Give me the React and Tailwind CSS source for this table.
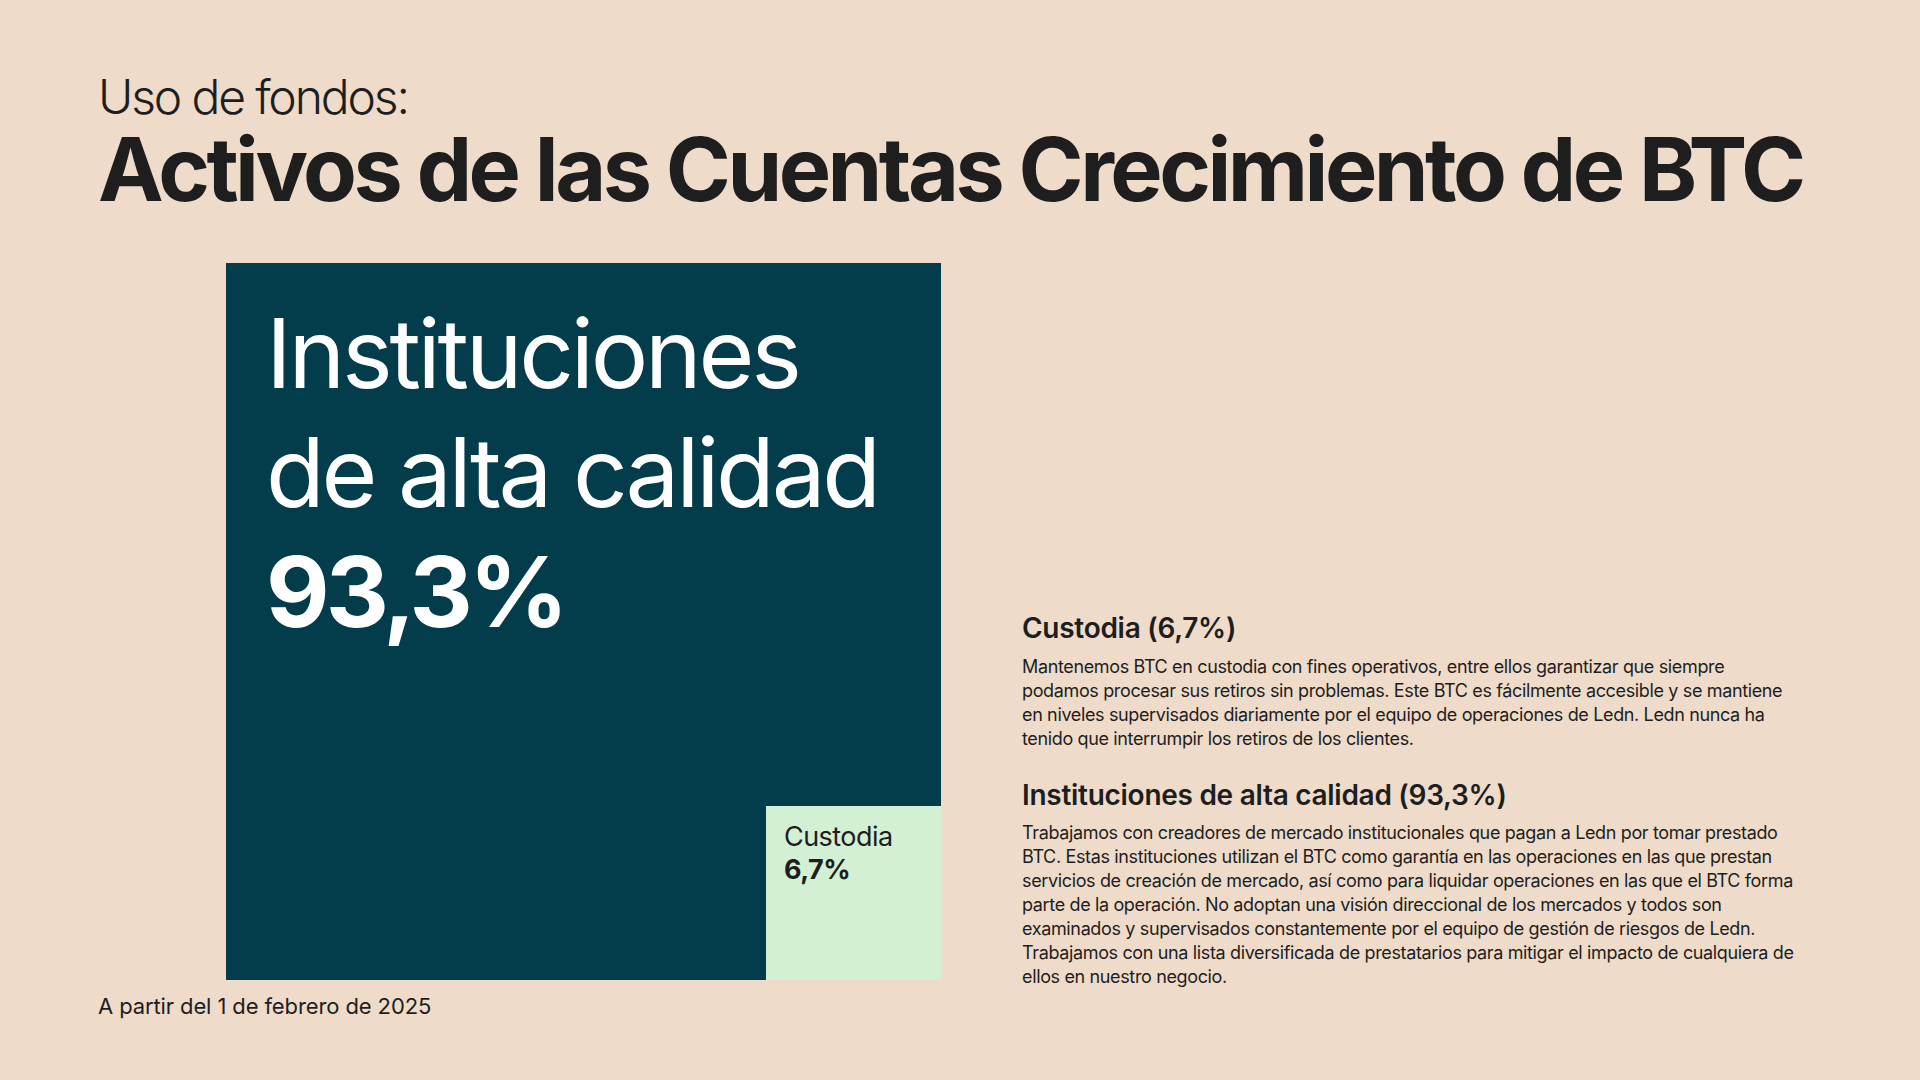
export default function App() {
  return (
    <div className="w-[1920px] h-[1080px] bg-[#EEDBCA] text-[#1E1E1E] font-['Inter',sans-serif] flex flex-col pl-[98px] pt-[75px] overflow-hidden">
      <p className="text-[48px] leading-[44px] font-light tracking-[-0.045em]">Uso de fondos:</p>
      <h1 className="mt-[10px] text-[88px] leading-[80px] font-bold tracking-[-0.04em] whitespace-nowrap">
        Activos de las Cuentas Crecimiento de BTC
      </h1>

      <div className="mt-[54px] flex h-[717px]">
        {/* Treemap */}
        <div className="ml-[128px] w-[715px] h-[717px] bg-[#033C4A] flex flex-col pl-[40px] pt-[31px] text-white">
          <p className="text-[96px] leading-[119px] font-normal tracking-[-0.034em]">Instituciones</p>
          <p className="text-[96px] leading-[119px] font-normal tracking-[-0.034em]">de alta calidad</p>
          <p className="text-[98px] leading-[119px] font-bold tracking-[-0.04em]">93,3%</p>
          <div className="mt-auto self-end w-[175px] h-[174px] bg-[#D4F0D4] text-[#1E1E1E] pl-[18px] pt-[14px]">
            <p className="text-[27px] leading-[33px] tracking-[-0.02em]">Custodia</p>
            <p className="text-[27px] leading-[33px] font-bold tracking-[-0.02em]">6,7%</p>
          </div>
        </div>

        {/* Descripciones */}
        <div className="ml-[81px] w-[840px] pt-[349px]">
          <h2 className="text-[28px] leading-[32px] font-semibold tracking-[-0.01em]">Custodia (6,7%)</h2>
          <p className="mt-[11px] text-[18px] leading-[24px] tracking-[-0.02em]">
            Mantenemos BTC en custodia con fines operativos, entre ellos garantizar que siempre<br />
            podamos procesar sus retiros sin problemas. Este BTC es fácilmente accesible y se mantiene<br />
            en niveles supervisados diariamente por el equipo de operaciones de Ledn. Ledn nunca ha<br />
            tenido que interrumpir los retiros de los clientes.
          </p>
          <h2 className="mt-[28px] text-[28px] leading-[32px] font-semibold tracking-[-0.01em]">
            Instituciones de alta calidad (93,3%)
          </h2>
          <p className="mt-[10px] text-[18px] leading-[24px] tracking-[-0.02em]">
            Trabajamos con creadores de mercado institucionales que pagan a Ledn por tomar prestado<br />
            BTC. Estas instituciones utilizan el BTC como garantía en las operaciones en las que prestan<br />
            servicios de creación de mercado, así como para liquidar operaciones en las que el BTC forma<br />
            parte de la operación. No adoptan una visión direccional de los mercados y todos son<br />
            examinados y supervisados constantemente por el equipo de gestión de riesgos de Ledn.<br />
            Trabajamos con una lista diversificada de prestatarios para mitigar el impacto de cualquiera de<br />
            ellos en nuestro negocio.
          </p>
        </div>
      </div>

      <p className="mt-[12px] text-[22px] leading-[28px] tracking-[-0.005em]">A partir del 1 de febrero de 2025</p>
    </div>
  );
}
